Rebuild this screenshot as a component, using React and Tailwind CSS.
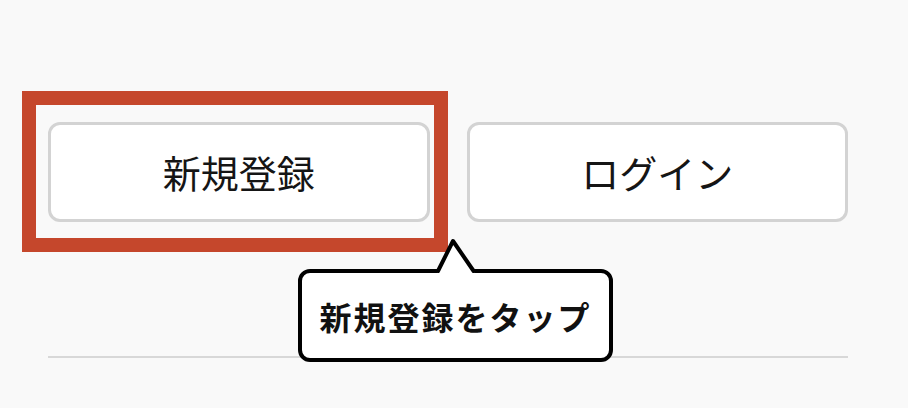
import React from "react";

const FONT = { fontFamily: '"Noto Sans CJK JP", "Noto Sans", sans-serif' };

// Tutorial overlay: highlight on the sign-up button plus a speech bubble.
export default function App() {
  return (
    <div className="relative h-[408px] w-[908px] overflow-hidden bg-[#f9f9f9] text-[#151515]" style={FONT}>
      <div className="pl-[48px] pr-[60px] pt-[122px]">
        <div className="grid grid-cols-2 gap-[37px]">
          <div className="relative">
            <button className="flex h-[100px] w-full items-center justify-center rounded-[12px] border-[3px] border-[#d3d3d3] bg-white text-[38px] leading-none">
              新規登録
            </button>
            <div className="pointer-events-none absolute left-[-26px] top-[-31px] h-[161px] w-[426px] border-[14px] border-[#c5472c]" />
          </div>
          <button className="flex h-[100px] w-full items-center justify-center rounded-[12px] border-[3px] border-[#d3d3d3] bg-white text-[38px] leading-none">
            ログイン
          </button>
        </div>
        <div className="mt-[134px] h-[2px] bg-[#d8d8d8]" />
      </div>

      {/* speech bubble */}
      <div className="absolute left-[298px] top-[269px] flex h-[93px] w-[315px] items-center justify-center rounded-[12px] border-4 border-black bg-white">
        <span className="text-[32px] font-bold leading-none tracking-[2px] text-[#111]">新規登録をタップ</span>
      </div>
      <svg className="absolute left-[425px] top-[232px]" width="60" height="46" viewBox="0 0 60 46">
        <path d="M28 9 L11.5 42.5 L50.7 42.5 Z" fill="#fff" />
        <path d="M13 39 L28 9 L48.6 39" fill="none" stroke="#000" strokeWidth="4" strokeLinejoin="round" strokeLinecap="round" />
      </svg>
    </div>
  );
}
